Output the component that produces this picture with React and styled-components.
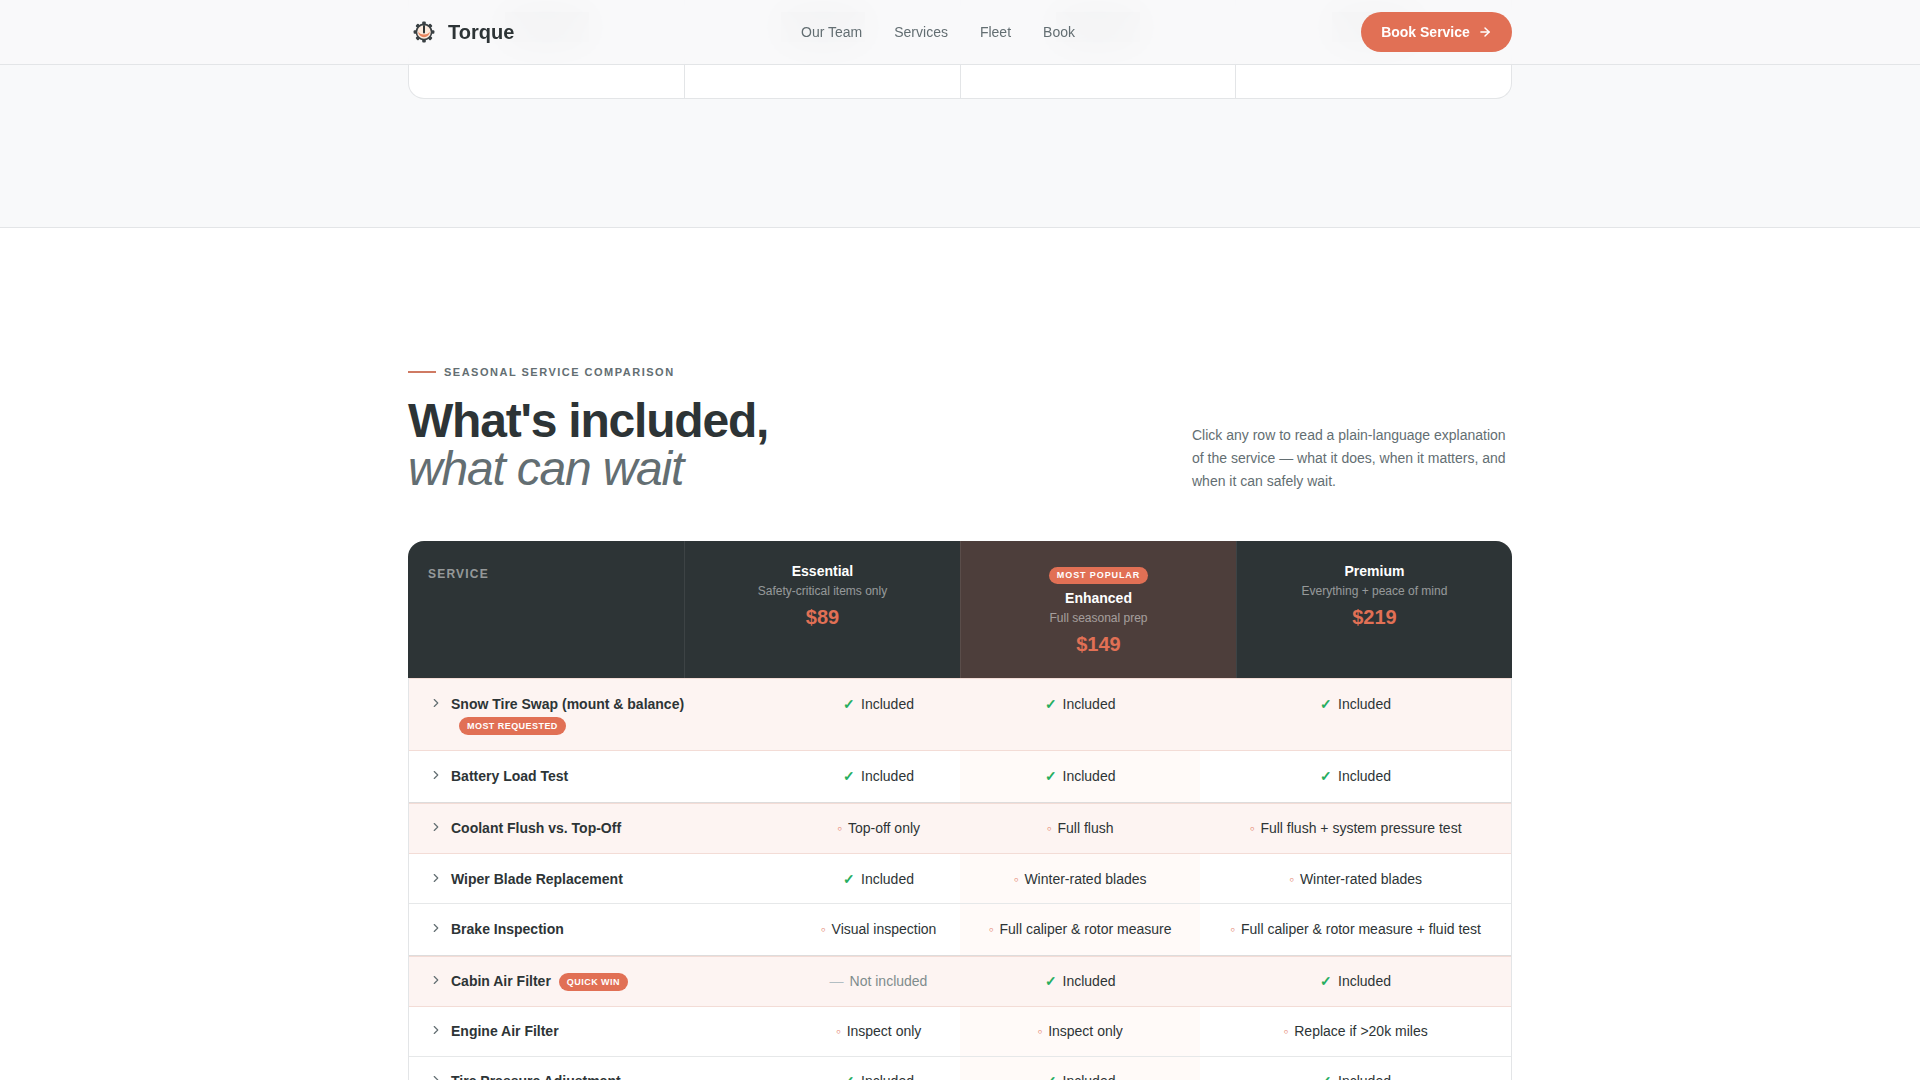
import React from "react";
import styled, { createGlobalStyle } from "styled-components";
import { ArrowRight, ChevronRight } from "lucide-react";

const GlobalStyle = createGlobalStyle`
  html, body {
    margin: 0;
    padding: 0;
    background: #fff;
    font-family: "Liberation Sans", Arial, sans-serif;
    color: #2d3436;
  }
`;

const yes = { kind: "yes", text: "Included" };
const part = (text) => ({ kind: "part", text });
const no = { kind: "no", text: "Not included" };

const rows = [
  { name: "Snow Tire Swap (mount & balance)", badge: "MOST REQUESTED", hot: true, low: true, cells: [yes, yes, yes] },
  { name: "Battery Load Test", low: true, after: 15, cells: [yes, yes, yes] },
  { name: "Coolant Flush vs. Top-Off", hot: true, cells: [part("Top-off only"), part("Full flush"), part("Full flush + system pressure test")] },
  { name: "Wiper Blade Replacement", low: true, after: 13, cells: [yes, part("Winter-rated blades"), part("Winter-rated blades")] },
  { name: "Brake Inspection", low: true, after: 15, cells: [part("Visual inspection"), part("Full caliper & rotor measure"), part("Full caliper & rotor measure + fluid test")] },
  { name: "Cabin Air Filter", badge: "QUICK WIN", hot: true, cells: [no, yes, yes] },
  { name: "Engine Air Filter", cells: [part("Inspect only"), part("Inspect only"), part("Replace if >20k miles")] },
  { name: "Tire Pressure Adjustment", cells: [yes, yes, yes] },
];

const plans = [
  { name: "Essential", sub: "Safety-critical items only", price: "$89" },
  { name: "Enhanced", sub: "Full seasonal prep", price: "$149", popular: true },
  { name: "Premium", sub: "Everything + peace of mind", price: "$219" },
];

const GearLogo = () => (
  <svg width="24" height="24" viewBox="0 0 24 24">
    <g fill="#3a4144">
      {[0, 45, 90, 135, 180, 225, 270, 315].map((deg) => (
        <rect key={deg} x="10.2" y="1.6" width="3.6" height="3.6" rx="1" transform={`rotate(${deg} 12 12)`} />
      ))}
    </g>
    <circle cx="12" cy="12" r="7.6" fill="#fbeadd" stroke="#3a4144" strokeWidth="1.6" />
    <path d="M6.2 11.5a5.8 5.8 0 0 0 11.6 0c-1 2-2.8 3-5.8 3s-4.8-1-5.8-3z" fill="#e8855f" />
    <path d="M12 6v6.5" stroke="#2d3436" strokeWidth="2" strokeLinecap="round" />
  </svg>
);

const App = () => (
  <Page>
    <GlobalStyle />
    <Nav>
      <NavInner>
        <Brand>
          <GearLogo />
          <BrandName>Torque</BrandName>
        </Brand>
        <NavLinks>
          <NavLink>Our Team</NavLink>
          <NavLink>Services</NavLink>
          <NavLink>Fleet</NavLink>
          <NavLink>Book</NavLink>
        </NavLinks>
        <BookButton>
          Book Service
          <ArrowRight size={14} strokeWidth={2.5} />
        </BookButton>
      </NavInner>
    </Nav>

    <PrevSection>
      <Container>
        <PrevCard>
          {[0, 1, 2, 3].map((i) => (
            <PrevCell key={i}>
              <Smudge />
            </PrevCell>
          ))}
        </PrevCard>
      </Container>
    </PrevSection>

    <Section>
      <Container>
        <Head>
          <div>
            <Eyebrow>SEASONAL SERVICE COMPARISON</Eyebrow>
            <Title>
              What's included,
              <TitleSoft>what can wait</TitleSoft>
            </Title>
          </div>
          <Lead>
            Click any row to read a plain-language explanation of the service — what it does, when it matters, and when
            it can safely wait.
          </Lead>
        </Head>

        <PlanHeader>
          <ServiceLabel>SERVICE</ServiceLabel>
          {plans.map((plan) => (
            <PlanCell key={plan.name} $popular={plan.popular}>
              {plan.popular && <PopularBadge>MOST POPULAR</PopularBadge>}
              <PlanName>{plan.name}</PlanName>
              <PlanSub>{plan.sub}</PlanSub>
              <PlanPrice>{plan.price}</PlanPrice>
            </PlanCell>
          ))}
        </PlanHeader>

        <Table>
          <colgroup>
            <col style={{ width: 388 }} />
            <col style={{ width: 163 }} />
            <col style={{ width: 240 }} />
            <col style={{ width: 311 }} />
          </colgroup>
          <tbody>
            {rows.map((row) => (
              <Row key={row.name} $hot={row.hot} $low={row.low} $after={row.after} $band={row.after === 15}>
                <NameCell>
                  <NameWrap>
                    <Chevron size={14} strokeWidth={2} />
                    <div>
                      <RowName>{row.name}</RowName>
                      {row.badge && <RowBadge>{row.badge}</RowBadge>}
                    </div>
                  </NameWrap>
                </NameCell>
                {row.cells.map((cell, i) => (
                  <ValueCell key={i} $tint={i === 1} $off={cell.kind === "no"}>
                    {cell.kind === "yes" && <Check>✓</Check>}
                    {cell.kind === "part" && <Dot>◦</Dot>}
                    {cell.kind === "no" && <Dash>—</Dash>}
                    {cell.text}
                  </ValueCell>
                ))}
              </Row>
            ))}
          </tbody>
        </Table>
      </Container>
    </Section>
  </Page>
);

const Page = styled.div`
  height: 100vh;
  overflow: hidden;
`;

const Container = styled.div`
  width: 1104px;
  margin: 0 auto;
`;

const Nav = styled.header`
  position: fixed;
  top: 0;
  left: 0;
  right: 0;
  z-index: 10;
  height: 64px;
  background: rgba(248, 249, 250, 0.92);
  backdrop-filter: blur(20px);
  border-bottom: 1px solid #e3e5e7;
`;

const NavInner = styled.div`
  width: 1104px;
  height: 100%;
  margin: 0 auto;
  display: flex;
  align-items: center;
  justify-content: space-between;
`;

const Brand = styled.div`
  display: flex;
  align-items: center;
  gap: 12px;
  width: 107px;
  white-space: nowrap;
  padding-left: 4px;
  box-sizing: border-box;
`;

const BrandName = styled.span`
  font-size: 20px;
  font-weight: 700;
  color: #2d3436;
`;

const NavLinks = styled.nav`
  display: flex;
  gap: 32px;
`;

const NavLink = styled.a`
  font-size: 14px;
  color: #636e72;
`;

const BookButton = styled.button`
  display: flex;
  align-items: center;
  gap: 8px;
  height: 40px;
  width: 151px;
  justify-content: center;
  border: 0;
  border-radius: 20px;
  background: #e17055;
  color: #fff;
  font-family: inherit;
  font-size: 14px;
  font-weight: 700;
`;

const PrevSection = styled.section`
  background: #f8f9fa;
  padding-bottom: 128px;
  border-bottom: 1px solid #e3e5e7;
`;

const PrevCard = styled.div`
  display: grid;
  grid-template-columns: 276px 276px 275px 1fr;
  height: 99px;
  box-sizing: border-box;
  background: #fff;
  border: 1px solid #e3e5e7;
  border-top: 0;
  border-radius: 0 0 16px 16px;
`;

const PrevCell = styled.div`
  display: flex;
  justify-content: center;
  padding-top: 12px;
  border-right: 1px solid #e3e5e7;
  &:last-child {
    border-right: 0;
  }
`;

const Smudge = styled.div`
  width: 84px;
  height: 30px;
  background: #2d3436;
  opacity: 0.42;
`;

const Section = styled.section`
  padding-top: 135px;
  background: #fff;
`;

const Head = styled.div`
  display: flex;
  justify-content: space-between;
  align-items: flex-end;
  margin-bottom: 48px;
`;

const Eyebrow = styled.div`
  display: flex;
  align-items: center;
  gap: 8px;
  height: 18px;
  margin-bottom: 16px;
  font-size: 11px;
  font-weight: 700;
  letter-spacing: 1.5px;
  color: #636e72;
  &::before {
    content: "";
    width: 28px;
    height: 2px;
    background: #cf7a63;
  }
`;

const Title = styled.h2`
  margin: 0;
  font-size: 48px;
  line-height: 48px;
  font-weight: 700;
  letter-spacing: -0.025em;
  color: #2d3436;
`;

const TitleSoft = styled.em`
  display: block;
  font-weight: 400;
  color: #636e72;
`;

const Lead = styled.p`
  width: 320px;
  margin: 0;
  font-size: 14px;
  line-height: 23.1px;
  color: #636e72;
`;

const PlanHeader = styled.div`
  display: grid;
  grid-template-columns: repeat(4, 1fr);
  height: 137px;
  background: #2d3436;
  border-radius: 16px 16px 0 0;
  overflow: hidden;
`;

const ServiceLabel = styled.div`
  padding: 24px 0 0 20px;
  font-size: 12px;
  line-height: 18px;
  font-weight: 700;
  letter-spacing: 0.1em;
  color: rgba(255, 255, 255, 0.5);
`;

const PlanCell = styled.div`
  display: flex;
  flex-direction: column;
  align-items: center;
  padding-top: 20px;
  box-sizing: border-box;
  border-left: 1px solid rgba(255, 255, 255, 0.08);
  background: ${(props) => (props.$popular ? "rgba(225, 112, 85, 0.18)" : "transparent")};
`;

const PopularBadge = styled.span`
  margin: 6px 0 4px;
  padding: 0 8px;
  height: 17px;
  line-height: 17px;
  border-radius: 9px;
  background: #e17055;
  color: #fff;
  font-size: 9px;
  font-weight: 700;
  letter-spacing: 0.1em;
`;

const PlanName = styled.div`
  font-size: 14px;
  line-height: 20px;
  font-weight: 700;
  color: #fff;
`;

const PlanSub = styled.div`
  font-size: 12px;
  line-height: 18px;
  margin-top: 1px;
  color: rgba(255, 255, 255, 0.5);
`;

const PlanPrice = styled.div`
  margin-top: 3px;
  font-size: 20px;
  line-height: 28px;
  font-weight: 700;
  color: #e17055;
`;

const Table = styled.table`
  width: 1104px;
  table-layout: fixed;
  border-collapse: separate;
  border-spacing: 0;
  border-left: 1px solid #e3e5e7;
  border-right: 1px solid #e3e5e7;
  font-size: 14px;
  line-height: 21px;
`;

const ValueCell = styled.td`
  padding: 14px 8px;
  text-align: center;
  vertical-align: top;
  background: ${(props) => (props.$tint ? "#fffaf8" : "transparent")};
  color: ${(props) => (props.$off ? "#7f8c8d" : "#2d3436")};
`;

const NameCell = styled.td`
  padding: 14px 8px 14px 20px;
  vertical-align: top;
`;

const Row = styled.tr`
  background: ${(props) => (props.$hot ? "#fdf4f2" : "#fff")};
  & > td {
    border-top: ${(props) => (props.$hot ? "1px solid #f3dcd6" : "0")};
    border-bottom: 1px solid ${(props) => (props.$hot ? "#f3dcd6" : props.$band ? "#dddcdc" : "#e6e8e9")};
    padding-top: ${(props) => (props.$low ? "15px" : "14px")};
    padding-bottom: ${(props) => props.$after || 14}px;
  }
  & > ${ValueCell} {
    background: ${(props) => (props.$hot ? "transparent" : undefined)};
  }
`;

const NameWrap = styled.div`
  display: flex;
  gap: 8px;
`;

const Chevron = styled(ChevronRight)`
  flex: none;
  margin-top: 2px;
  color: #636e72;
`;

const RowName = styled.span`
  font-weight: 700;
  color: #2d3436;
`;

const RowBadge = styled.span`
  display: inline-block;
  margin-left: 8px;
  padding: 0 8px;
  height: 18px;
  line-height: 18px;
  border-radius: 9px;
  background: #e17055;
  color: #fff;
  font-size: 9px;
  font-weight: 700;
  letter-spacing: 0.05em;
  vertical-align: middle;
`;

const Check = styled.span`
  margin-right: 6px;
  line-height: 1;
  font-weight: 700;
  color: #27ae60;
`;

const Dot = styled.span`
  margin-right: 6px;
  line-height: 1;
  color: #e17055;
  opacity: 0.8;
`;

const Dash = styled.span`
  margin-right: 6px;
  line-height: 1;
  color: #b2bec3;
`;

export default App;
